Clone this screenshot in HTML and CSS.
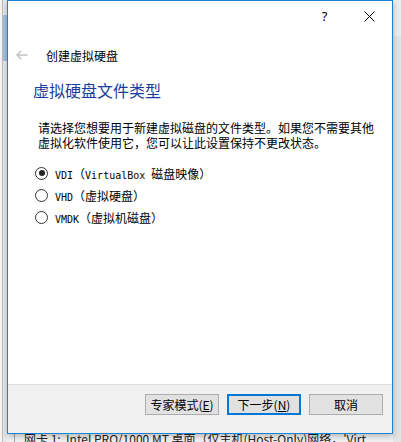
FILE: index.html
```html
<!DOCTYPE html>
<html lang="zh-CN">
<head>
  <meta charset="UTF-8">
  <title>创建虚拟硬盘</title>
  <link rel="stylesheet" href="styles.css">
</head>
<body>
  <div class="desktop">
    <div class="left-strip"><div class="left-tab"></div></div>
    <div class="right-strip"></div>
    <p class="status">网卡 1:&nbsp;&nbsp;Intel PRO/1000 MT 桌面（仅主机(Host-Only)网络，'Virt</p>

    <div class="dialog">
      <div class="titlebar">
        <span class="cap-btn">?</span>
        <span class="cap-btn">
          <svg width="11" height="11" viewBox="0 0 11 11"><path d="M0.5 0.5L10.5 10.5M10.5 0.5L0.5 10.5" stroke="#000" stroke-width="1" fill="none"/></svg>
        </span>
      </div>

      <div class="wizard-head">
        <svg class="back" width="12" height="10" viewBox="0 0 12 10"><path d="M11.5 5H1.2M5.3 0.8L1 5l4.3 4.2" stroke="#c2c2c2" stroke-width="1.4" fill="none"/></svg>
        <span class="wizard-title">创建虚拟硬盘</span>
      </div>

      <div class="page">
        <h2>虚拟硬盘文件类型</h2>
        <p class="desc">请选择您想要用于新建虚拟磁盘的文件类型。如果您不需要其他虚拟化软件使用它，您可以让此设置保持不更改状态。</p>

        <ul class="options">
          <li><span class="radio checked"></span><span class="label"><span class="m">VDI</span>（<span class="m">VirtualBox </span>磁盘映像）</span></li>
          <li><span class="radio"></span><span class="label"><span class="m">VHD</span>（虚拟硬盘）</span></li>
          <li><span class="radio"></span><span class="label"><span class="m">VMDK</span>（虚拟机磁盘）</span></li>
        </ul>
      </div>

      <div class="footer">
        <button>专家模式(<u>E</u>)</button>
        <button class="default">下一步(<u>N</u>)</button>
        <button>取消</button>
      </div>
    </div>
  </div>
</body>
</html>
```

FILE: styles.css
```css
body {
  margin: 0;
  font-family: "Noto Sans CJK SC", "Noto Sans", sans-serif;
  font-size: 12px;
  color: #000;
  background-color: #f0f0f0;
}
.desktop {
  position: relative;
  width: 401px;
  height: 442px;
  overflow: hidden;
  background-color: #f0f0f0;
}
.left-strip {
  position: absolute;
  left: 0;
  top: 0;
  width: 7px;
  height: 442px;
  background: linear-gradient(to right, #f4f4f4 0, #f4f4f4 2px, #bdbdbd 2px, #bdbdbd 3px, #e8e8e8 3px);
}
.left-tab {
  margin-top: 15px;
  margin-left: 3px;
  width: 4px;
  height: 46px;
  background-color: #a9c1dc;
}
.right-strip {
  position: absolute;
  right: 0;
  top: 0;
  width: 8px;
  height: 442px;
  background-color: #e3e3e3;
  border-top: 36px solid #ececec;
  box-sizing: border-box;
}
.status {
  position: absolute;
  left: 14px;
  top: 431px;
  margin: 0;
  padding-left: 9px;
  border-left: 1px solid #a0a0a0;
  white-space: nowrap;
  font-size: 12px;
  line-height: 15px;
  color: #222;
}
.dialog {
  position: absolute;
  left: 7px;
  top: 0;
  width: 386px;
  height: 434px;
  box-sizing: border-box;
  border: 1px solid #1883d7;
  background-color: #fff;
  display: flex;
  flex-direction: column;
  box-shadow: 0 2px 6px rgba(0, 0, 0, 0.25);
}
.titlebar {
  height: 30px;
  display: flex;
  justify-content: flex-end;
}
.cap-btn {
  width: 45px;
  height: 30px;
  display: flex;
  align-items: center;
  justify-content: center;
  font-family: "Noto Sans", sans-serif;
  font-size: 13px;
}
.wizard-head {
  height: 48px;
  display: flex;
  align-items: center;
}
.back {
  margin-left: 8px;
  margin-right: 18px;
}
.wizard-title {
  font-size: 12px;
}
.page {
  flex: 1;
  padding: 0 16px 0 25px;
}
h2 {
  margin: 0;
  font-size: 16px;
  font-weight: normal;
  line-height: 22px;
  color: #1a3d9e;
}
.desc {
  margin: 19px 0 0 5px;
  line-height: 15px;
  font-size: 12px;
}
.options {
  list-style: none;
  margin: 12px 0 0 2px;
  padding: 0;
}
.options li {
  height: 22px;
  display: flex;
  align-items: center;
}
.m {
  font-family: "DejaVu Sans Mono", "Liberation Mono", monospace;
  font-size: 10px;
  white-space: pre;
}
.radio {
  width: 11px;
  height: 11px;
  border: 1px solid #333;
  border-radius: 50%;
  margin-right: 7px;
  box-sizing: content-box;
  display: flex;
  align-items: center;
  justify-content: center;
  background-color: #fff;
}
.radio.checked::after {
  content: "";
  width: 6px;
  height: 6px;
  border-radius: 50%;
  background-color: #222;
}
.footer {
  height: 39px;
  border-top: 1px solid #dfdfdf;
  background-color: #f0f0f0;
  display: flex;
  justify-content: flex-end;
  align-items: flex-start;
  gap: 8px;
  padding: 9px 9px 0 0;
}
button {
  width: 74px;
  height: 21px;
  padding: 0;
  font-family: "Noto Sans CJK SC", sans-serif;
  font-size: 12px;
  line-height: 19px;
  background-color: #e1e1e1;
  border: 1px solid #adadad;
  color: #000;
}
button.default {
  border: 2px solid #0078d7;
  line-height: 17px;
}
```
